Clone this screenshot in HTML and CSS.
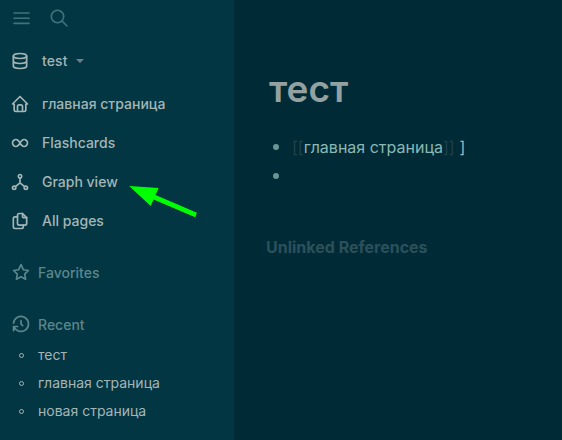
FILE: index.html
```html
<!DOCTYPE html>
<html lang="ru">
<head>
<meta charset="utf-8">
<title>тест</title>
<link rel="stylesheet" href="styles.css">
</head>
<body>
<div class="app">
  <aside class="sidebar">
    <header class="toolbar">
      <svg class="tool" width="20" height="20" viewBox="0 0 20 20"><path d="M3 5h15M3 10.200h15M3 15.400h15"/></svg>
      <svg class="tool" width="20" height="20" viewBox="0 0 20 20"><circle cx="8.500" cy="8.500" r="6.200"/><path d="M13 13l5 5"/></svg>
    </header>
    <div class="item graph">
      <svg class="icon" viewBox="0 0 24 24"><ellipse cx="12" cy="6" rx="8" ry="3"/><path d="M4 6v6a8 3 0 0 0 16 0V6M4 12v6a8 3 0 0 0 16 0v-6"/></svg>
      <span>test</span><i class="caret"></i>
    </div>
    <nav class="nav">
      <a class="item"><svg class="icon" viewBox="0 0 24 24"><path d="M5 12H3l9-9 9 9h-2M5 12v7a2 2 0 0 0 2 2h10a2 2 0 0 0 2-2v-7M9 21v-6a2 2 0 0 1 2-2h2a2 2 0 0 1 2 2v6"/></svg><span>главная страница</span></a>
      <a class="item"><svg class="icon" viewBox="0 0 24 24"><path d="M9.830 9.170a4 4 0 1 0 0 5.660 10 10 0 0 0 2.170-2.830 10 10 0 0 1 2.170-2.830 4 4 0 1 1 0 5.660A10 10 0 0 1 12 12a10 10 0 0 0-2.170-2.830"/></svg><span>Flashcards</span></a>
      <a class="item"><svg class="icon" viewBox="0 0 24 24"><circle cx="12" cy="5" r="2"/><circle cx="5" cy="19" r="2"/><circle cx="19" cy="19" r="2"/><path d="M6.500 17.500l5.500-4.500 5.500 4.500M12 7v6"/></svg><span>Graph view</span></a>
      <a class="item"><svg class="icon" viewBox="0 0 24 24"><path d="M15 3v4a1 1 0 0 0 1 1h4"/><path d="M18 17h-7a2 2 0 0 1-2-2V5a2 2 0 0 1 2-2h4l5 5v7a2 2 0 0 1-2 2z"/><path d="M16 17v2a2 2 0 0 1-2 2H6a2 2 0 0 1-2-2V9a2 2 0 0 1 2-2h3"/></svg><span>All pages</span></a>
    </nav>
    <div class="section favorites"><svg class="icon" viewBox="0 0 24 24"><path d="M12 17.750l-5.500 2.900 1.050-6.150-4.450-4.350 6.150-.9L12 3l2.750 6.250 6.150.9-4.450 4.350 1.050 6.150z"/></svg><span>Favorites</span></div>
    <div class="section recent"><svg class="icon" viewBox="0 0 24 24"><path d="M12 8v4l2 2M3.050 11a9 9 0 1 1 .5 4m-.5 5v-5h5"/></svg><span>Recent</span></div>
    <ul class="pages">
      <li>тест</li>
      <li>главная страница</li>
      <li>новая страница</li>
    </ul>
    <svg class="arrow" width="70" height="34" viewBox="0 0 70 34"><path d="M1.200 2L30.600 4l-3.100 6.900L68.900 28.800l-1.700 4.500L25.600 15.400 22.700 22z"/></svg>
  </aside>
  <main class="page">
    <h1>тест</h1>
    <ul class="blocks">
      <li><span class="bracket">[[</span><a>главная страница</a><span class="bracket">]]</span> <span class="tail">]</span></li>
      <li></li>
    </ul>
    <h2>Unlinked References</h2>
  </main>
</div>
</body>
</html>
```
FILE: styles.css
```css
*, *::before { box-sizing: border-box; }
body { margin: 0; background: #002b36; font-family: Inter, sans-serif; }
h1, h2, ul { margin: 0; padding: 0; }
ul { list-style: none; }
.app { display: flex; width: 562px; height: 440px; overflow: hidden; }
.sidebar { position: relative; width: 234px; flex: none; background: #023643; color: #a4b5b6; }
svg { display: block; flex: none; fill: none; stroke: currentColor; stroke-linecap: round; stroke-linejoin: round; }
.toolbar { display: flex; gap: 18px; height: 41px; padding: 8px 0 0 11px; color: #3f747c; }
.tool { stroke-width: 1.6; }
.item { display: flex; align-items: center; height: 39px; padding-left: 10px; font-size: 14px; font-weight: 500; line-height: 20px; }
.icon { width: 20px; height: 20px; margin-right: 12px; stroke-width: 2; }
.caret { margin-left: 8px; border: 4px solid transparent; border-top-color: #727f8d; border-bottom: 0; }
.graph { letter-spacing: 0.1px; }
.nav { padding-top: 4px; }
.section { display: flex; align-items: center; height: 20px; padding-left: 11px; font-size: 14px; font-weight: 500; color: #5d868b; }
.section .icon { margin-right: 7px; }
.favorites { margin-top: 22px; }
.recent { margin-top: 32px; }
.pages { padding-top: 6px; }
.pages li { display: flex; align-items: center; height: 28px; padding-left: 19px; font-size: 14px; }
.pages li::before { content: ""; width: 5px; height: 5px; flex: none; margin-right: 14px; border: 1px solid #a4b5b6; border-radius: 50%; position: relative; top: 1px; }
.arrow { position: absolute; left: 128px; top: 184px; fill: #00ff00; stroke: none; }
.page { padding: 67px 0 0 32px; }
h1 { padding-left: 3px; font-size: 37px; line-height: 44px; font-weight: 600; color: #93a1a1; }
.blocks { padding-top: 21px; }
.blocks li { display: flex; align-items: center; height: 29px; padding-left: 7px; font-size: 16px; white-space: pre; color: #8ab8b4; }
.blocks li::before { content: ""; width: 6px; height: 6px; margin-right: 13px; border-radius: 50%; background: #6b9594; }
.bracket { color: #1f424c; }
.tail { margin-left: 5px; color: #a4b5b6; }
h2 { margin-top: 46px; font-size: 16px; line-height: 22px; font-weight: 700; color: #2c505b; }
```
